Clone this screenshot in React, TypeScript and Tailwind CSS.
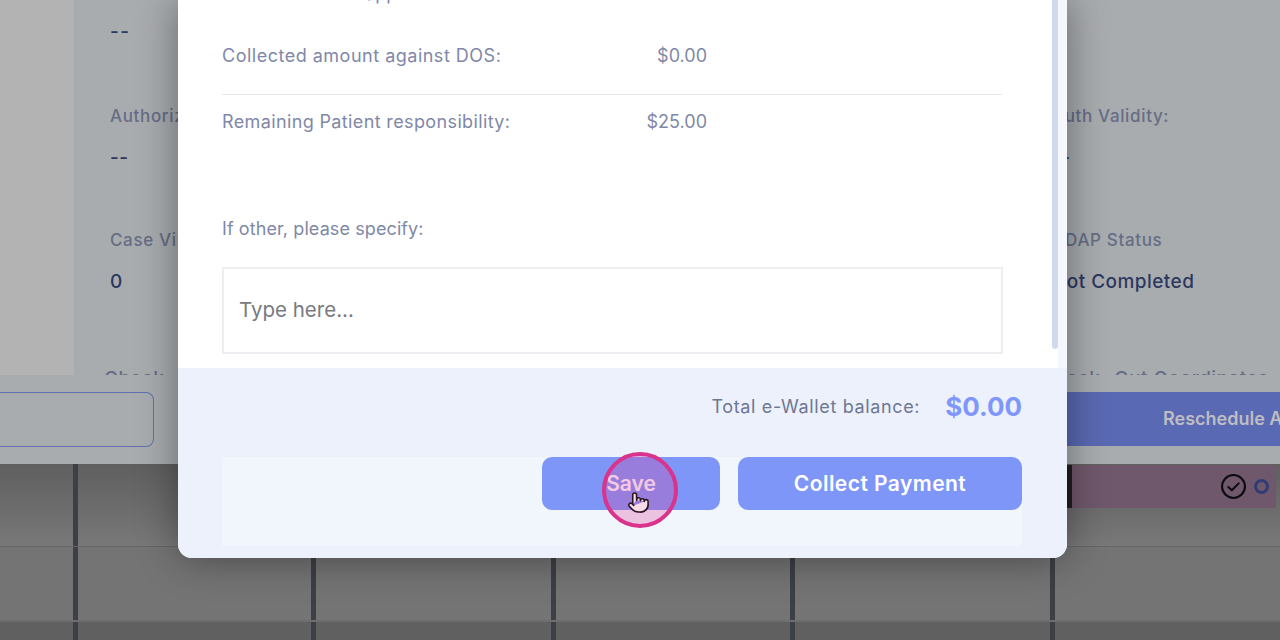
import { Pointer } from "lucide-react";

const font = "font-['Inter','Liberation_Sans',sans-serif]";
const labelText = "text-[17px] leading-6 font-medium tracking-[0.65px] whitespace-nowrap text-[#666d85]";
const valueText = "text-[19px] leading-6 font-medium tracking-[0.45px] whitespace-nowrap text-[#2b3860]";
const coordText = "text-[19px] leading-6 font-medium tracking-[0.45px] whitespace-nowrap text-[#666d85]";

function Field({ label, value }: { label: string; value: string }) {
  return (
    <div className="flex h-[124px] flex-col">
      <p className={labelText}>{label}</p>
      <p className={`mt-[18px] ${valueText}`}>{value}</p>
    </div>
  );
}

function BackgroundPage() {
  return (
    <div className="flex h-[464px] flex-col bg-[#a9acaf]">
      <div className="flex h-[375px] shrink-0 overflow-hidden">
        <div className="w-[74px] shrink-0 bg-[#b3b3b3]" />
        <div className="flex flex-1 justify-between overflow-hidden pr-[78px] pl-9">
          <div className="w-[300px]">
            <p className={`mt-[20px] tracking-[1.5px] ${valueText}`}>--</p>
            <div className="mt-[60px]">
              <Field label="Authorization" value="--" />
            </div>
            <Field label="Case Visit" value="0" />
            <p className={`mt-[15px] -ml-[6px] ${coordText}`}>Check- In Coordinates</p>
          </div>
          <div className="w-[150px]">
            <div className="mt-[104px]">
              <Field label="Auth Validity:" value="--" />
            </div>
            <Field label="CDAP Status" value="Not Completed" />
            <p className={`mt-[15px] -ml-[12px] ${coordText}`}>Check- Out Coordinates</p>
          </div>
        </div>
      </div>
      <div className="mt-[17px] flex items-start justify-between">
        <div className="h-[55px] w-[154px] rounded-r-lg border border-l-0 border-[#6470b4]" />
        <div className="flex h-[54px] w-[280px] items-center overflow-hidden bg-[#5a69b3] pl-[163px]">
          <span className="text-lg font-semibold whitespace-nowrap text-[#bdbdc2]">Reschedule Appointment</span>
        </div>
      </div>
    </div>
  );
}

function GridRow({ className }: { className: string }) {
  return (
    <div className={`flex ${className}`}>
      <div className="w-[73px] shrink-0" />
      <div className="w-[238px] shrink-0 border-l-[5px] border-[#3c3f44]" />
      <div className="w-[240px] shrink-0 border-l-[5px] border-[#3c3f44]" />
      <div className="w-[239px] shrink-0 border-l-[5px] border-[#3c3f44]" />
      <div className="w-[260px] shrink-0 border-l-[5px] border-[#3c3f44]" />
      <div className="flex-1 border-l-[5px] border-[#3c3f44]" />
    </div>
  );
}

function CalendarGrid() {
  return (
    <div className="flex h-[176px] flex-col bg-[#747474]">
      <div className="relative flex h-[83px] shrink-0 flex-col border-b border-[#666666] bg-gradient-to-b from-[#5f5f5f] to-[#787878]">
        <GridRow className="h-full" />
        <div className="absolute top-px right-[4px] flex h-[43px] w-[209px] items-center justify-end gap-[8px] border-l-[5px] border-[#1f201e] bg-[#70586c] pr-[7px]">
          <svg viewBox="0 0 24 24" className="h-[25px] w-[25px] fill-none stroke-[#0b0b0f] stroke-2">
            <circle cx="12" cy="12" r="11" />
            <path d="M7 12.5l3.4 3.2L17 9" strokeLinecap="round" strokeLinejoin="round" />
          </svg>
          <div className="h-[15px] w-[15px] rounded-full border-[3px] border-[#2f3b72]" />
        </div>
      </div>
      <GridRow className="h-[73px] shrink-0" />
      <GridRow className="flex-1 border-t-2 border-[#6d6d6d] bg-[#606060]" />
    </div>
  );
}

function PaymentModal() {
  return (
    <div className="absolute top-0 left-[178px] flex h-[558px] w-[889px] flex-col overflow-hidden rounded-b-[14px] bg-white shadow-[0_0_40px_rgba(0,0,0,0.4)]">
      <div className="relative h-[368px] shrink-0 overflow-hidden pr-[64px] pl-[44px]">
        <div className="absolute top-0 right-[9px] h-[349px] w-[6px] rounded-b bg-[#d0daec]" />
        <div className="absolute top-0 right-0 h-full w-[9px] bg-[#f4f7fd]" />
        <p className="-mt-[18px] h-[24px] pl-[72px] text-lg leading-6 text-[#7f88a8]">Amount applied</p>
        <div className="mt-[37px] flex w-[485px] items-center justify-between pt-px text-lg leading-6 text-[#7f88a8]">
          <span className="tracking-[0.5px]">Collected amount against DOS:</span>
          <span>$0.00</span>
        </div>
        <div className="mt-[26px] h-px w-[780px] bg-[#e6e8ee]" />
        <div className="mt-[15px] flex w-[485px] items-center justify-between text-lg leading-6 text-[#7f88a8]">
          <span className="tracking-[0.37px]">Remaining Patient responsibility:</span>
          <span>$25.00</span>
        </div>
        <p className="mt-[83px] text-lg leading-6 tracking-[0.1px] text-[#7f88a8]">If other, please specify:</p>
        <div className="mt-[26px] flex h-[87px] w-[781px] items-center border-2 border-[#eceef2] px-[15px] text-[20.5px] text-[#787a80]">
          Type here...
        </div>
      </div>
      <div className="flex flex-1 flex-col bg-[#ecf1fb] pr-[45px] pl-[44px]">
        <div className="mt-[20px] flex h-[36px] items-center justify-end gap-[25px]">
          <span className="pt-px text-lg tracking-[0.65px] text-[#6e7794]">Total e-Wallet balance:</span>
          <span className="text-[26px] font-bold text-[#7f96fb]">$0.00</span>
        </div>
        <div className="mt-[33px] flex h-[89px] items-start justify-end gap-[18px] bg-[#f1f6fc]">
          <button className="h-[53px] w-[178px] rounded-[10px] bg-[#7f96f9] text-[21px] font-semibold text-white">Save</button>
          <button className="h-[53px] w-[284px] rounded-[10px] bg-[#7f96f9] text-[21px] font-semibold tracking-[0.45px] text-white">Collect Payment</button>
        </div>
      </div>
    </div>
  );
}

export default function App() {
  return (
    <div className={`relative h-[640px] w-[1280px] overflow-hidden ${font}`}>
      <BackgroundPage />
      <CalendarGrid />
      <PaymentModal />
      {/* click highlight over the Save button */}
      <div className="absolute top-[452px] left-[602px] flex h-[76px] w-[76px] items-center justify-center rounded-full border-[4px] border-[#d9338b] bg-[#dc3c96]/[0.28]">
        <Pointer className="mt-[24px] -ml-[3px] h-[23px] w-[23px] fill-[#f7dbe9] stroke-[#2a1620]" strokeWidth={1.6} />
      </div>
    </div>
  );
}
